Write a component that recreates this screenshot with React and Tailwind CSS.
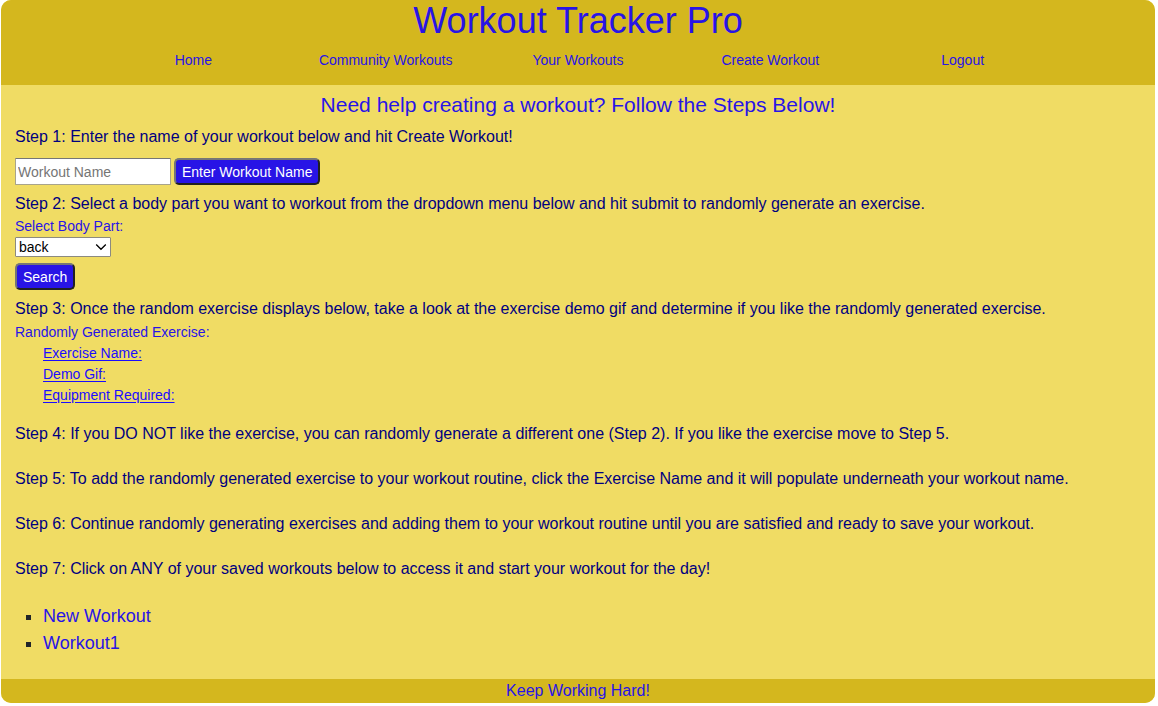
const navItems = ["Home", "Community Workouts", "Your Workouts", "Create Workout", "Logout"];
const bodyParts = ["back", "cardio", "chest", "lower arms", "lower legs", "neck", "shoulders", "upper arms", "upper legs", "waist"];
const exerciseFields = ["Exercise Name:", "Demo Gif:", "Equipment Required:"];
const finalSteps = [
  "Step 5: To add the randomly generated exercise to your workout routine, click the Exercise Name and it will populate underneath your workout name.",
  "Step 6: Continue randomly generating exercises and adding them to your workout routine until you are satisfied and ready to save your workout.",
  "Step 7: Click on ANY of your saved workouts below to access it and start your workout for the day!",
];
const savedWorkouts = ["New Workout", "Workout1"];

function Step({ className = "", children }) {
  return <p className={`text-base leading-5 text-[#000080] ${className}`}>{children}</p>;
}

function ActionButton({ children }) {
  return (
    <button
      type="submit"
      className="h-[27px] rounded-[5px] border-2 border-t-[#767676] border-l-[#767676] border-r-[#212121] border-b-[#212121] bg-[#2814e6] px-1.5 text-sm leading-5 text-white"
    >
      {children}
    </button>
  );
}

export default function App() {
  const stop = (event) => event.preventDefault();

  return (
    <div className="mr-[3px] ml-px overflow-hidden rounded-[10px] bg-[#f0dc64] font-['Liberation_Sans',Arial,sans-serif] text-sm text-[#2814e6]">
      <header className="bg-[#d4b71e] pb-3.5">
        <h1 className="text-center text-4xl leading-[42px]">Workout Tracker Pro</h1>
        <nav className="mt-[7px] flex justify-center leading-[22px]">
          {navItems.map((item) => (
            <a key={item} href="#" className="w-1/6 text-center">{item}</a>
          ))}
        </nav>
      </header>

      <main className="px-3.5 pt-[7px] pb-[22px]">
        <h2 className="text-center text-[21px] leading-[26px]">Need help creating a workout? Follow the Steps Below!</h2>

        <Step className="mt-[9px]">Step 1: Enter the name of your workout below and hit Create Workout!</Step>
        <form onSubmit={stop} className="mt-[11px] flex gap-[3px]">
          <input
            type="text"
            aria-label="Workout Name"
            placeholder="Workout Name"
            className="h-[27px] w-[156px] rounded-[1px] border border-[#a8a48c] border-t-[#767676] bg-white px-0.5 text-sm text-black placeholder:text-[#757575]"
          />
          <ActionButton>Enter Workout Name</ActionButton>
        </form>

        <Step className="mt-[9px]">
          Step 2: Select a body part you want to workout from the dropdown menu below and hit submit to randomly generate an exercise.
        </Step>
        <form onSubmit={stop} className="mt-px flex flex-col items-start">
          <label htmlFor="body-part" className="leading-[22px]">Select Body Part:</label>
          <div className="grid items-center">
            <select
              id="body-part"
              className="col-start-1 row-start-1 h-5 w-24 appearance-none rounded-[1px] border border-[#8c8a80] bg-white pl-[3px] text-sm leading-4 text-black"
            >
              {bodyParts.map((part) => <option key={part}>{part}</option>)}
            </select>
            <svg viewBox="0 0 12 8" className="pointer-events-none col-start-1 row-start-1 mr-1 h-2 w-3 justify-self-end" fill="none" stroke="black" strokeWidth="1.3" aria-hidden="true">
              <path d="M1.2 1.5 6 6.3l4.800-4.800" />
            </svg>
          </div>
          <div className="mt-1.5 flex">
            <ActionButton>Search</ActionButton>
          </div>
        </form>

        <Step className="mt-[9px]">
          Step 3: Once the random exercise displays below, take a look at the exercise demo gif and determine if you like the randomly generated exercise.
        </Step>
        <p className="mt-0.5 leading-[22px]">Randomly Generated Exercise:</p>
        <ul className="pl-7 leading-[21px] text-[#1a0dff]">
          {exerciseFields.map((field) => (
            <li key={field}><a href="#" className="underline underline-offset-2">{field}</a></li>
          ))}
        </ul>

        <Step className="mt-[18px]">
          Step 4: If you DO NOT like the exercise, you can randomly generate a different one (Step 2). If you like the exercise move to Step 5.
        </Step>
        {finalSteps.map((text) => (
          <Step key={text} className="mt-[25px]">{text}</Step>
        ))}

        <ul className="mt-6 list-[square] pl-7 text-lg leading-[27px] marker:text-[#212529]">
          {savedWorkouts.map((name) => (
            <li key={name}><a href="#">{name}</a></li>
          ))}
        </ul>
      </main>

      <footer className="bg-[#d4b71e] text-center text-base leading-6">Keep Working Hard!</footer>
    </div>
  );
}
